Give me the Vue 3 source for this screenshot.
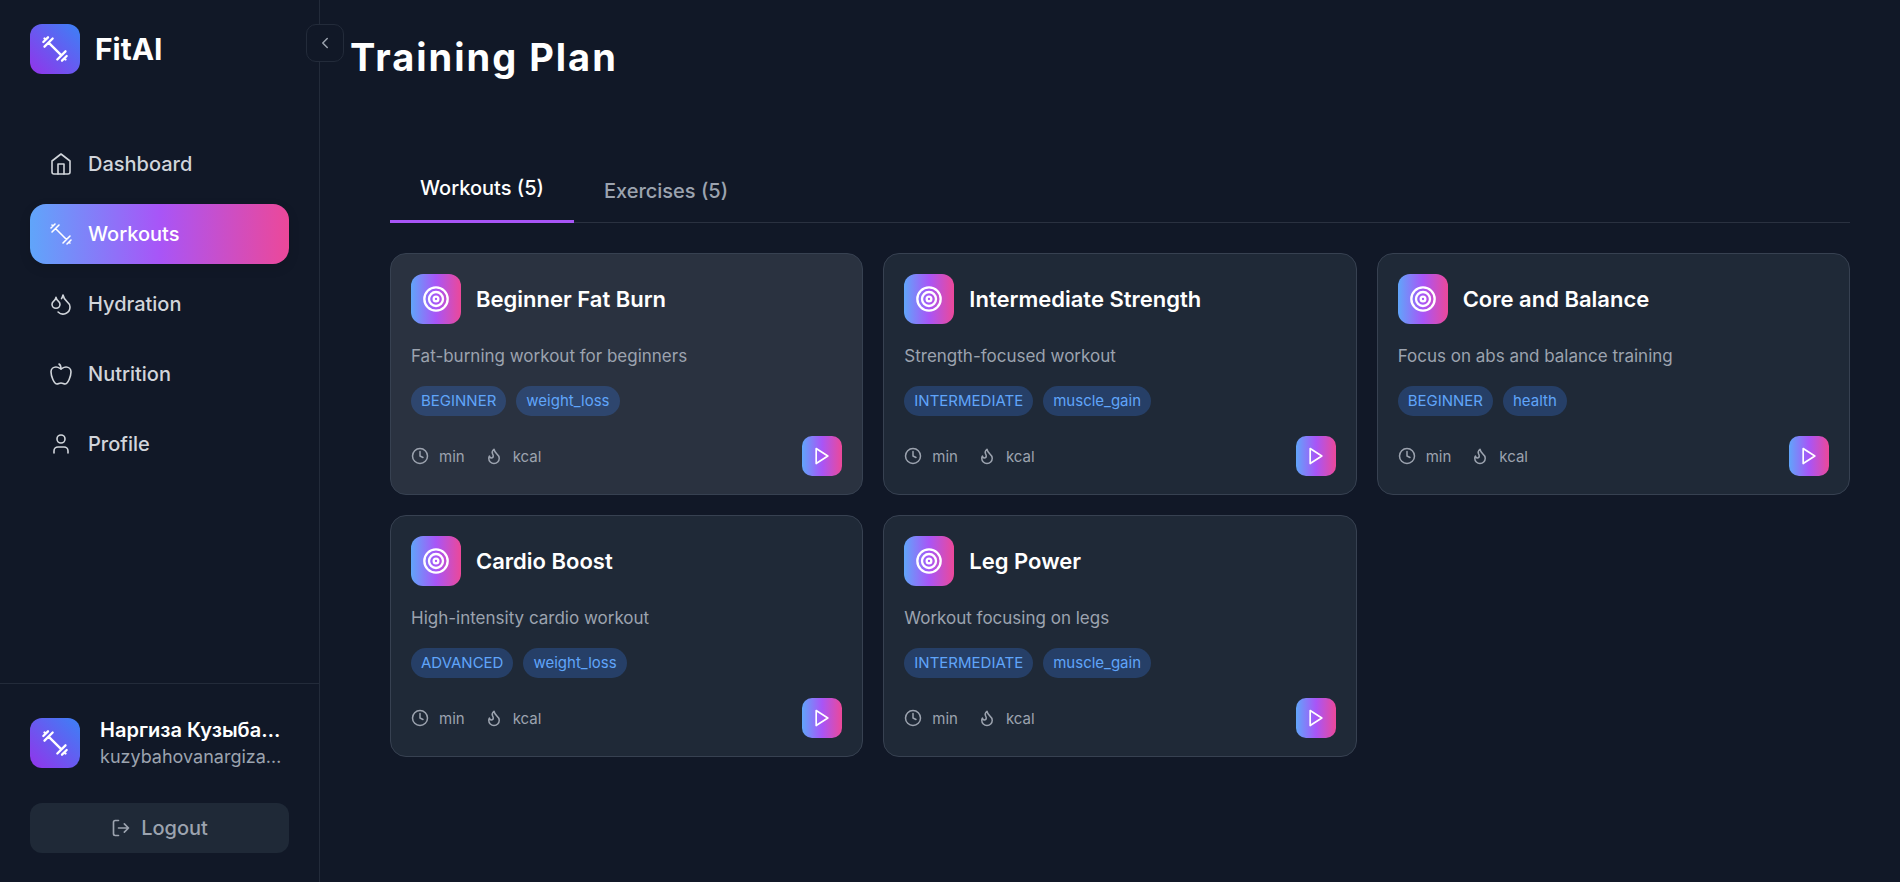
<script setup>
const nav = [
  { label: 'Dashboard', icon: 'home' },
  { label: 'Workouts', icon: 'dumbbell', active: true },
  { label: 'Hydration', icon: 'droplets' },
  { label: 'Nutrition', icon: 'apple' },
  { label: 'Profile', icon: 'user' },
]
const workouts = [
  { title: 'Beginner Fat Burn', desc: 'Fat-burning workout for beginners', tags: ['BEGINNER', 'weight_loss'], hover: true },
  { title: 'Intermediate Strength', desc: 'Strength-focused workout', tags: ['INTERMEDIATE', 'muscle_gain'] },
  { title: 'Core and Balance', desc: 'Focus on abs and balance training', tags: ['BEGINNER', 'health'] },
  { title: 'Cardio Boost', desc: 'High-intensity cardio workout', tags: ['ADVANCED', 'weight_loss'] },
  { title: 'Leg Power', desc: 'Workout focusing on legs', tags: ['INTERMEDIATE', 'muscle_gain'] },
]
</script>

<template>
  <div class="app">
    <aside class="sidebar">
      <div class="brand">
        <div class="logo">
          <svg class="i28" viewBox="0 0 24 24"><path d="m6.5 6.5 11 11M21 21l-1-1M3 3l1 1M18 22l4-4M2 6l4-4M3 10l7-7M14 21l7-7" /></svg>
        </div>
        <span class="brand-name">FitAI</span>
      </div>
      <nav class="nav">
        <a v-for="n in nav" :key="n.label" class="nav-item" :class="{ active: n.active }">
          <svg class="i24" viewBox="0 0 24 24">
            <template v-if="n.icon === 'home'"><path d="M3 9l9-7 9 7v11a2 2 0 0 1-2 2H5a2 2 0 0 1-2-2z" /><path d="M9 22V12h6v10" /></template>
            <path v-else-if="n.icon === 'dumbbell'" d="m6.5 6.5 11 11M21 21l-1-1M3 3l1 1M18 22l4-4M2 6l4-4M3 10l7-7M14 21l7-7" />
            <template v-else-if="n.icon === 'droplets'"><path d="M7 16.3c2.2 0 4-1.83 4-4.05 0-1.16-.57-2.26-1.71-3.19S7.29 6.75 7 5.3c-.29 1.45-1.14 2.84-2.29 3.76S3 11.1 3 12.25c0 2.22 1.8 4.05 4 4.05z" /><path d="M12.56 6.6A10.97 10.97 0 0 0 14 3.02c.5 2.5 2 4.9 4 6.5s3 3.5 3 5.5a6.98 6.98 0 0 1-11.91 4.97" /></template>
            <template v-else-if="n.icon === 'apple'"><path d="M12 20.94c1.5 0 2.75 1.06 4 1.06 3 0 6-8 6-12.22A4.91 4.91 0 0 0 17 5c-2.22 0-4 1.44-5 2-1-.56-2.78-2-5-2a4.9 4.9 0 0 0-5 4.78C2 14 5 22 8 22c1.25 0 2.5-1.06 4-1.06Z" /><path d="M10 2c1 .5 2 2 2 5" /></template>
            <template v-else><path d="M19 21v-2a4 4 0 0 0-4-4H9a4 4 0 0 0-4 4v2" /><circle cx="12" cy="7" r="4" /></template>
          </svg>
          <span>{{ n.label }}</span>
        </a>
      </nav>
      <div class="foot">
        <div class="user">
          <div class="logo">
            <svg class="i28" viewBox="0 0 24 24"><path d="m6.5 6.5 11 11M21 21l-1-1M3 3l1 1M18 22l4-4M2 6l4-4M3 10l7-7M14 21l7-7" /></svg>
          </div>
          <div class="user-text">
            <div class="user-name">Наргиза Кузыбаева</div>
            <div class="user-mail">kuzybahovanargiza@gmail.com</div>
          </div>
        </div>
        <button class="logout">
          <svg class="i20" viewBox="0 0 24 24"><path d="M9 21H5a2 2 0 0 1-2-2V5a2 2 0 0 1 2-2h4M16 17l5-5-5-5M21 12H9" /></svg>
          <span>Logout</span>
        </button>
      </div>
      <button class="toggle">
        <svg class="i18" viewBox="0 0 24 24"><path d="m15 18-6-6 6-6" /></svg>
      </button>
    </aside>

    <main class="main">
      <h1 class="title">Training Plan</h1>
      <section class="content">
        <div class="tabs">
          <button class="tab on">Workouts (5)</button>
          <button class="tab">Exercises (5)</button>
        </div>
        <div class="grid">
          <article v-for="w in workouts" :key="w.title" class="card" :class="{ hover: w.hover }">
            <div class="card-head">
              <div class="card-icon">
                <svg class="i28" viewBox="0 0 24 24"><circle cx="12" cy="12" r="10" /><circle cx="12" cy="12" r="6" /><circle cx="12" cy="12" r="2" /></svg>
              </div>
              <h3 class="card-title">{{ w.title }}</h3>
            </div>
            <p class="desc">{{ w.desc }}</p>
            <div class="tags">
              <span v-for="t in w.tags" :key="t" class="tag">{{ t }}</span>
            </div>
            <div class="card-foot">
              <div class="meta">
                <span class="meta-item">
                  <svg class="i18" viewBox="0 0 24 24"><circle cx="12" cy="12" r="10" /><path d="M12 6v6l4 2" /></svg>
                  min
                </span>
                <span class="meta-item">
                  <svg class="i18" viewBox="0 0 24 24"><path d="M8.5 14.5A2.5 2.5 0 0 0 11 12c0-1.38-.5-2-1-3-1.072-2.143-.224-4.054 2-6 .5 2.5 2 4.9 4 6.5 2 1.6 3 3.5 3 5.5a7 7 0 1 1-14 0c0-1.153.433-2.294 1-3a2.5 2.5 0 0 0 2.5 2.5z" /></svg>
                  kcal
                </span>
              </div>
              <button class="play">
                <svg class="i20" viewBox="0 0 24 24"><path d="M5 3l14 9-14 9z" /></svg>
              </button>
            </div>
          </article>
        </div>
      </section>
    </main>
  </div>
</template>

<style scoped>
.app {
  display: flex;
  height: 882px;
  background: #111827;
  color: #fff;
  font-family: Inter, "Noto Sans", sans-serif;
  overflow: hidden;
}
svg {
  fill: none;
  stroke: currentColor;
  stroke-width: 2;
  stroke-linecap: round;
  stroke-linejoin: round;
  flex: none;
  display: block;
}
.i18 { width: 18px; height: 18px; }
.i20 { width: 20px; height: 20px; }
.i24 { width: 24px; height: 24px; stroke-width: 1.6; }
.i28 { width: 28px; height: 28px; }
.sidebar {
  position: relative;
  flex: none;
  width: 320px;
  box-sizing: border-box;
  border-right: 1px solid #232b3a;
  display: flex;
  flex-direction: column;
}
.brand {
  display: flex;
  align-items: center;
  gap: 15px;
  padding: 24px 30px 0;
}
.logo {
  width: 50px;
  height: 50px;
  flex: none;
  border-radius: 12px;
  background: linear-gradient(to top right, #9333ea, #3b82f6);
  display: flex;
  align-items: center;
  justify-content: center;
}
.logo svg { width: 28px; height: 28px; stroke-width: 2; }
.brand-name {
  font-size: 30px;
  font-weight: 700;
  line-height: 50px;
}
.nav {
  display: flex;
  flex-direction: column;
  gap: 10px;
  margin-top: 60px;
  padding: 0 30px;
}
.nav-item {
  height: 60px;
  width: 259px;
  box-sizing: border-box;
  padding: 0 19px;
  border-radius: 16px;
  display: flex;
  align-items: center;
  gap: 15px;
  font-size: 20px;
  font-weight: 500;
  color: #d1d5db;
}
.nav-item.active {
  color: #fff;
  background: linear-gradient(90deg, #60a5fa, #a855f7, #ec4899);
  box-shadow: 0 4px 12px rgba(0, 0, 0, 0.12);
}
.foot {
  margin-top: auto;
  border-top: 1px solid #232b3a;
  padding: 32px 30px 29px;
}
.user {
  display: flex;
  align-items: center;
  gap: 20px;
}
.user-text { min-width: 0; flex: 1; }
.user-name, .user-mail {
  white-space: nowrap;
  overflow: hidden;
  text-overflow: ellipsis;
}
.user-name { font-size: 20px; font-weight: 600; line-height: 28px; }
.user-mail { font-size: 18px; color: #9ca3af; line-height: 26px; }
.logout {
  margin-top: 33px;
  width: 259px;
  height: 50px;
  border: none;
  border-radius: 12px;
  background: #1f2937;
  color: #9ca3af;
  font: 500 20px Inter, sans-serif;
  display: flex;
  align-items: center;
  justify-content: center;
  gap: 10px;
}
.toggle {
  position: absolute;
  left: 306px;
  top: 24px;
  width: 38px;
  height: 38px;
  box-sizing: border-box;
  padding: 0;
  background: #111827;
  border: 1px solid #232b3a;
  border-radius: 10px;
  color: #9ca3af;
  display: flex;
  align-items: center;
  justify-content: center;
}
.main {
  flex: 1;
  min-width: 0;
  padding: 0 50px 0 30px;
}
.title {
  margin: 30px 0 0;
  font-size: 38px;
  line-height: 54px;
  font-weight: 700;
  letter-spacing: 2px;
}
.content {
  margin-top: 75px;
  padding-left: 40px;
}
.tabs {
  display: flex;
  gap: 0;
  border-bottom: 1px solid #2a3140;
  height: 63px;
}
.tab {
  background: none;
  border: none;
  padding: 0 30px;
  height: 64px;
  box-sizing: border-box;
  font: 500 20px Inter, sans-serif;
  color: #9ca3af;
}
.tab.on {
  color: #fff;
  padding-bottom: 4px;
  border-bottom: 3px solid #a855f7;
}
.grid {
  display: grid;
  grid-template-columns: repeat(3, 1fr);
  gap: 20px;
  margin-top: 30px;
}
.card {
  box-sizing: border-box;
  height: 242px;
  padding: 20px;
  border: 1px solid #374151;
  border-radius: 16px;
  background: #1f2937;
  display: flex;
  flex-direction: column;
}
.card.hover { background: #2a3240; }
.card-head {
  display: flex;
  align-items: center;
  gap: 15px;
}
.card-icon {
  width: 50px;
  height: 50px;
  border-radius: 12px;
  background: linear-gradient(90deg, #60a5fa, #a855f7, #ec4899);
  display: flex;
  align-items: center;
  justify-content: center;
}
.card-title {
  margin: 0;
  font-size: 22px;
  font-weight: 600;
}
.desc {
  margin: 20px 0 0;
  font-size: 17px;
  line-height: 24px;
  color: #9ca3af;
}
.tags {
  display: flex;
  gap: 10px;
  margin-top: 18px;
}
.tag {
  height: 30px;
  line-height: 30px;
  padding: 0 10px;
  border-radius: 15px;
  font-size: 15px;
  color: #60a5fa;
  background: rgba(59, 130, 246, 0.25);
}
.card-foot {
  display: flex;
  align-items: center;
  justify-content: space-between;
  margin-top: 20px;
}
.meta {
  display: flex;
  gap: 20px;
}
.meta-item {
  display: flex;
  align-items: center;
  gap: 10px;
  font-size: 15px;
  color: #9ca3af;
}
.play {
  width: 40px;
  height: 40px;
  padding: 0;
  border: none;
  border-radius: 10px;
  color: #fff;
  background: linear-gradient(90deg, #60a5fa, #a855f7, #ec4899);
  display: flex;
  align-items: center;
  justify-content: center;
}
</style>
